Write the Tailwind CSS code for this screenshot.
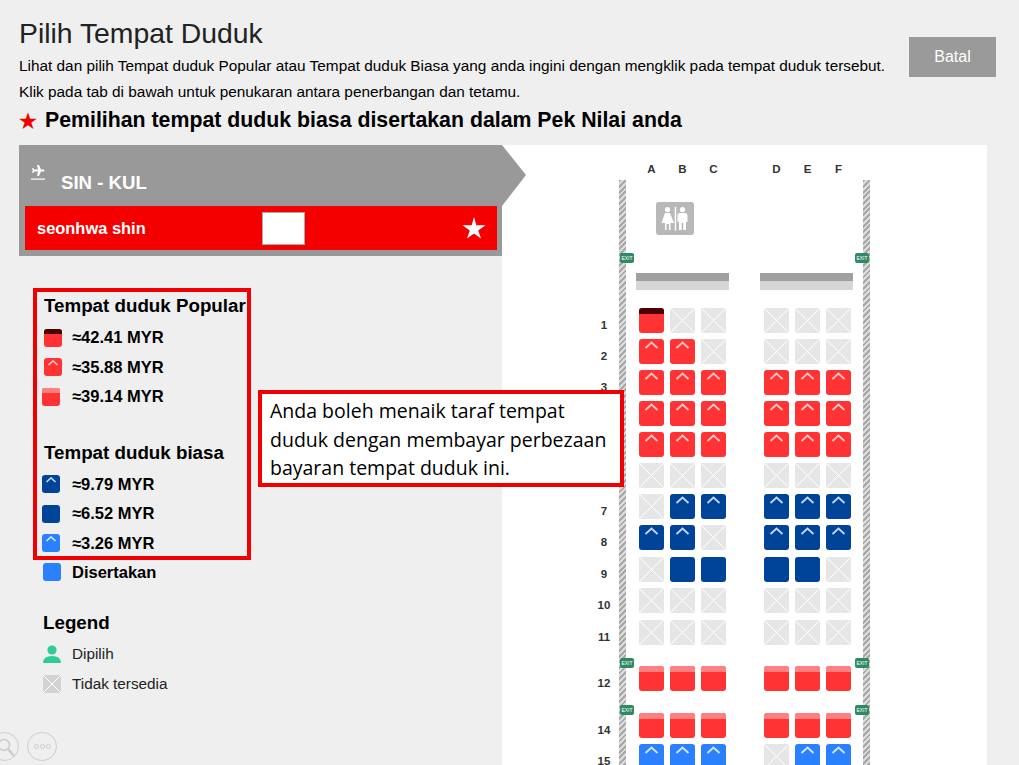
<!DOCTYPE html>
<html lang="en">

<head>
    <meta charset="UTF-8">
    <title>Pilih Tempat Duduk</title>
    <script src="https://cdn.jsdelivr.net/npm/@tailwindcss/browser@4"></script>
</head>

<body class="bg-[#efefef] text-black font-['Liberation_Sans',Arial,sans-serif]">
    <div class="relative h-[765px] overflow-hidden">
        <!-- header -->
        <div class="flex justify-between h-[145px]">
            <div class="pl-[19px] pt-[17px] whitespace-nowrap">
                <h1 class="text-[28.35px] leading-[33px] text-[#222]">Pilih Tempat Duduk</h1>
                <p class="text-[15.37px] leading-[27px] mt-[2px]">Lihat dan pilih Tempat duduk Popular atau Tempat duduk Biasa yang anda ingini dengan mengklik pada tempat duduk tersebut.</p>
                <p class="text-[15.37px] leading-[27px] -mt-[1px]">Klik pada tab di bawah untuk penukaran antara penerbangan dan tetamu.</p>
                <p class="flex items-center h-[28px] mt-[2px] text-[21.3px] font-bold"><span class="w-[26px] text-[20px] text-[#f00000]">★</span>Pemilihan tempat duduk biasa disertakan dalam Pek Nilai anda</p>
            </div>
            <button class="mt-[37px] mr-[23px] w-[87px] h-[40px] shrink-0 bg-[#9a9a9a] text-white text-[16px]">Batal</button>
        </div>

        <div class="flex">
            <!-- left column -->
            <div class="relative z-10 w-[483px] ml-[19px] shrink-0">
                <div class="relative h-[111px] bg-[#999999] pl-[6px] pr-[5px]">
                    <svg class="absolute left-[483px] top-0" width="24" height="61" viewBox="0 0 24 61"><path d="M0 0 L24 30 L0 61 Z" fill="#999999"/></svg>
                    <div class="flex h-[61px]">
                        <svg class="ml-[6px] mt-[20px]" width="14" height="15" viewBox="0 0 14 15" fill="#fff"><path d="M6 0 L8 0 L10 4.5 L13 4.5 Q14 5.5 13 6.5 L10 6.5 L8 11 L6 11 L7 6.5 L3.5 6.5 L2 8 L1 8 L1.8 5.5 L1 3 L2 3 L3.5 4.5 L7 4.5 Z"/><rect x="0" y="13.5" width="14" height="1.2"/></svg>
                        <span class="ml-[16px] mt-[27px] text-[18.6px] leading-[22px] font-bold text-white">SIN - KUL</span>
                    </div>
                    <div class="flex items-center h-[44px] bg-[#f50000] pl-[12px]">
                        <span class="w-[225px] text-[16.45px] font-bold text-white">seonhwa shin</span>
                        <div class="w-[43px] h-[33px] bg-white border border-[#aaaaaa]"></div>
                        <svg class="ml-[157px]" width="24" height="24" viewBox="0 0 24 24" fill="#fff"><path d="M12 1 L14.3 9.2 L23.5 9.2 L16.2 14.4 L19 22.5 L12 17.6 L5 22.5 L7.8 14.4 L0.5 9.2 L9.7 9.2 Z"/></svg>
                    </div>
                </div>

                <!-- price legend -->
                <div class="ml-[14px] mt-[32px] w-[218px] h-[272px] border-[4px] border-[#f00000] pl-[7px] whitespace-nowrap">
                    <h2 class="h-[27px] leading-[27px] text-[18.75px] font-bold">Tempat duduk Popular</h2>
                    <div class="flex items-center h-[29.5px] mt-[4px]">
                        <div class="w-[28px]"><div class="relative w-[18px] h-[18px] rounded-[3px] bg-[#ff3333] overflow-hidden"><div class="h-[5px] bg-[#4d0000]"></div></div></div>
                        <span class="text-[16.5px] font-bold">≈42.41 MYR</span>
                    </div>
                    <div class="flex items-center h-[29.5px]">
                        <div class="w-[28px]"><div class="w-[18px] h-[18px] rounded-[3px] bg-[#ff3333]"><svg width="18" height="10" viewBox="0 0 18 10" fill="none" stroke="#ffc6c6" stroke-width="1.6"><path d="M4.5 7 L9 2.8 L13.5 7"/></svg></div></div>
                        <span class="text-[16.5px] font-bold">≈35.88 MYR</span>
                    </div>
                    <div class="flex items-center h-[29.5px]">
                        <div class="w-[28px]"><div class="-ml-[2px] w-[18px] h-[18px] rounded-[3px] bg-[#ff3333] overflow-hidden"><div class="h-[5px] bg-[#ff8080]"></div></div></div>
                        <span class="text-[16.5px] font-bold">≈39.14 MYR</span>
                    </div>
                    <h2 class="mt-[27px] h-[27px] leading-[27px] text-[18.75px] font-bold">Tempat duduk biasa</h2>
                    <div class="flex items-center h-[29.5px] mt-[4px]">
                        <div class="w-[28px]"><div class="-ml-[2px] w-[18px] h-[18px] rounded-[3px] bg-[#004499]"><svg width="18" height="10" viewBox="0 0 18 10" fill="none" stroke="#c6d6ea" stroke-width="1.6"><path d="M4.5 7 L9 2.8 L13.5 7"/></svg></div></div>
                        <span class="text-[16.5px] font-bold">≈9.79 MYR</span>
                    </div>
                    <div class="flex items-center h-[29.5px]">
                        <div class="w-[28px]"><div class="-ml-[2px] w-[18px] h-[18px] rounded-[3px] bg-[#004499]"></div></div>
                        <span class="text-[16.5px] font-bold">≈6.52 MYR</span>
                    </div>
                    <div class="flex items-center h-[29.5px]">
                        <div class="w-[28px]"><div class="-ml-[2px] w-[18px] h-[18px] rounded-[3px] bg-[#2b80ff]"><svg width="18" height="10" viewBox="0 0 18 10" fill="none" stroke="#d5e6ff" stroke-width="1.6"><path d="M4.5 7 L9 2.8 L13.5 7"/></svg></div></div>
                        <span class="text-[16.5px] font-bold">≈3.26 MYR</span>
                    </div>
                </div>

                <div class="flex items-center h-[24px] pl-[24px]">
                    <div class="w-[29px]"><div class="w-[18px] h-[18px] rounded-[3px] bg-[#2b80ff]"></div></div>
                    <span class="text-[16.5px] font-bold">Disertakan</span>
                </div>
                <h2 class="mt-[24.5px] pl-[24px] h-[27px] leading-[27px] text-[18.75px] font-bold">Legend</h2>
                <div class="flex items-center h-[30px] mt-[3.5px] pl-[24px]">
                    <svg class="w-[18px] h-[18px] mr-[11px]" viewBox="0 0 18 18" fill="#2ecc9a"><circle cx="9" cy="5" r="4.6"/><path d="M0 18 Q0 11 9 11 Q18 11 18 18 Z"/></svg>
                    <span class="text-[15.3px] text-[#222]">Dipilih</span>
                </div>
                <div class="flex items-center h-[30px] pl-[24px]">
                    <svg class="w-[18px] h-[18px] mr-[11px]" viewBox="0 0 18 18"><rect width="18" height="18" fill="#d2d2d2"/><path d="M0 0 L18 18 M18 0 L0 18" stroke="#fff" stroke-width="1"/></svg>
                    <span class="text-[15.3px] text-[#222]">Tidak tersedia</span>
                </div>
            </div>

            <!-- seat map -->
            <div class="w-[485px] h-[620px] bg-white shrink-0">
                <div id="letters" class="flex h-[35px] pl-[137px] pt-[17px] text-[11.5px] leading-[14px] font-bold text-[#333]"></div>
                <div class="flex ml-[117px]">
                    <div class="w-[7px] h-[585px] bg-[repeating-linear-gradient(135deg,#a8a8a8_0,#a8a8a8_2px,#dcdcdc_2px,#dcdcdc_4px)]"></div>
                    <div class="w-[237px]">
                        <div class="ml-[30px] mt-[22px] w-[38px] h-[33px] rounded-[3px] bg-[#b8b8b8]">
                            <svg width="38" height="33" viewBox="0 0 38 33" fill="#fff"><circle cx="11.5" cy="7.5" r="2.6"/><path d="M9 11 L14 11 L18 21 L14.5 21 L14.5 28 L13 28 L13 22 L10.5 22 L10.5 28 L9 28 L9 21 L5.5 21 Z"/><rect x="18.7" y="5" width="1.5" height="23.5"/><circle cx="26.5" cy="7.5" r="2.6"/><path d="M23 11 L30 11 L31.5 13 L31.5 20 L30 20 L30 28 L27.3 28 L27.3 21 L25.7 21 L25.7 28 L23 28 L23 20 L21.5 20 L21.5 13 Z"/></svg>
                        </div>
                        <div class="flex mt-[38px]">
                            <div class="ml-[10px] w-[93px] h-[17px] bg-[#d6d6d6]"><div class="h-[8px] bg-[#a0a0a0]"></div></div>
                            <div class="ml-[31px] w-[93px] h-[17px] bg-[#d6d6d6]"><div class="h-[8px] bg-[#a0a0a0]"></div></div>
                        </div>
                        <div id="rows" class="mt-[18px]"></div>
                    </div>
                    <div class="w-[7px] h-[585px] bg-[repeating-linear-gradient(135deg,#a8a8a8_0,#a8a8a8_2px,#dcdcdc_2px,#dcdcdc_4px)]"></div>
                </div>
            </div>
        </div>

        <!-- exit signs sit over the cabin walls -->
        <div class="absolute left-[620px] top-[253px] w-[14px] h-[10px] rounded-[2px] bg-[#2f8a63] text-white text-[5px] leading-[10px] text-center">EXIT</div>
        <div class="absolute left-[855px] top-[253px] w-[14px] h-[10px] rounded-[2px] bg-[#2f8a63] text-white text-[5px] leading-[10px] text-center">EXIT</div>
        <div class="absolute left-[620px] top-[658px] w-[14px] h-[10px] rounded-[2px] bg-[#2f8a63] text-white text-[5px] leading-[10px] text-center">EXIT</div>
        <div class="absolute left-[855px] top-[658px] w-[14px] h-[10px] rounded-[2px] bg-[#2f8a63] text-white text-[5px] leading-[10px] text-center">EXIT</div>
        <div class="absolute left-[620px] top-[705px] w-[14px] h-[10px] rounded-[2px] bg-[#2f8a63] text-white text-[5px] leading-[10px] text-center">EXIT</div>
        <div class="absolute left-[855px] top-[705px] w-[14px] h-[10px] rounded-[2px] bg-[#2f8a63] text-white text-[5px] leading-[10px] text-center">EXIT</div>

        <!-- callout -->
        <div class="absolute z-20 left-[258px] top-[390px] w-[366px] h-[97px] bg-white border-[4px] border-[#f00000] pl-[8px] pt-[3px] text-[19.5px] leading-[28.5px] text-black font-['Open_Sans',sans-serif]">
            Anda boleh menaik taraf tempat<br>duduk dengan membayar perbezaan<br>bayaran tempat duduk ini.
        </div>

        <!-- floating tools -->
        <div class="absolute left-[-10px] top-[732px] w-[29px] h-[29px] rounded-full border border-[#cccccc]">
            <svg width="27" height="27" viewBox="0 0 27 27" fill="none" stroke="#cccccc" stroke-width="1.5"><circle cx="13" cy="12" r="5.5"/><path d="M17 16 L23 23" stroke-width="2.5"/></svg>
        </div>
        <div class="absolute left-[27px] top-[732px] w-[30px] h-[29px] rounded-full border border-[#cccccc] flex items-center justify-center gap-[1px]">
            <span class="w-[5px] h-[5px] rounded-full border border-[#cccccc]"></span>
            <span class="w-[5px] h-[5px] rounded-full border border-[#cccccc]"></span>
            <span class="w-[5px] h-[5px] rounded-full border border-[#cccccc]"></span>
        </div>
    </div>

    <script>
        const chevron = (stroke) => `<svg width="25" height="13" viewBox="0 0 25 13" fill="none" stroke="${stroke}" stroke-width="1.8"><path d="M6.5 9 L12.5 3.5 L18.5 9"/></svg>`;
        const seats = {
            x: `<div class="w-[25px] h-[25px] rounded-[2px] bg-[#e6e6e6] overflow-hidden"><svg width="25" height="25" viewBox="0 0 25 25"><path d="M1 1 L24 24 M24 1 L1 24" stroke="#fff" stroke-width="1"/></svg></div>`,
            d: `<div class="w-[25px] h-[25px] rounded-[3px] bg-[#ff3333] overflow-hidden"><div class="h-[6px] bg-[#4d0000]"></div></div>`,
            r: `<div class="w-[25px] h-[25px] rounded-[3px] bg-[#ff3333]">${chevron('#ffc6c6')}</div>`,
            l: `<div class="w-[25px] h-[25px] rounded-[3px] bg-[#ff3333] overflow-hidden"><div class="h-[6px] bg-[#ff8080]"></div></div>`,
            n: `<div class="w-[25px] h-[25px] rounded-[3px] bg-[#004499]">${chevron('#c6d6ea')}</div>`,
            N: `<div class="w-[25px] h-[25px] rounded-[3px] bg-[#004499]"></div>`,
            b: `<div class="w-[25px] h-[25px] rounded-[3px] bg-[#2b80ff]">${chevron('#d5e6ff')}</div>`
        };
        const rows = [
            ['1', 'dxxxxx', ''], ['2', 'rrxxxx', ''], ['3', 'rrrrrr', ''], ['', 'rrrrrr', ''], ['', 'rrrrrr', ''],
            ['', 'xxxxxx', ''], ['7', 'xnnnnn', ''], ['8', 'nnxnnn', ''], ['9', 'xNNNNx', 'mt-[1px]'], ['10', 'xxxxxx', ''],
            ['11', 'xxxxxx', 'mt-[1px]'], ['12', 'llllll', 'mt-[15px]'], ['14', 'llllll', 'mt-[16px]'], ['15', 'bbbxbb', '']
        ];
        document.getElementById('rows').innerHTML = rows.map(([num, row, extra]) => {
            const cells = [...row].map((s, i) => {
                const gap = i === 3 ? 'ml-[38px]' : i === 0 ? '' : 'ml-[6px]';
                return `<div class="${gap}">${seats[s]}</div>`;
            }).join('');
            return `<div class="flex h-[31px] ${extra}"><span class="-ml-[36px] mr-[21px] w-[28px] h-[25px] pt-[5px] text-center text-[11.5px] leading-[25px] font-bold text-[#333]">${num}</span>${cells}</div>`;
        }).join('');
        document.getElementById('letters').innerHTML = [...'ABCDEF'].map((c, i) => {
            const gap = i === 3 ? 'ml-[38px]' : i === 0 ? '' : 'ml-[6px]';
            return `<span class="w-[25px] text-center ${gap}">${c}</span>`;
        }).join('');
    </script>
</body>

</html>
